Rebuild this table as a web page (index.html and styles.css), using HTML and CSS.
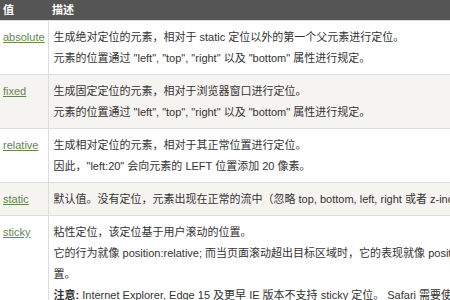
FILE: index.html
```html
<!DOCTYPE html>
<html lang="zh-CN">
<head>
  <meta charset="UTF-8">
  <title>CSS position 属性值</title>
  <link rel="stylesheet" href="styles.css">
</head>
<body>
  <div class="page">
    <table class="reference">
      <colgroup>
        <col class="col-value">
        <col>
      </colgroup>
      <tr>
        <th>值</th>
        <th>描述</th>
      </tr>
      <tr>
        <td><a href="#">absolute</a></td>
        <td>
          <p>生成绝对定位的元素，相对于 static 定位以外的第一个父元素进行定位。</p>
          <p>元素的位置通过 "left", "top", "right" 以及 "bottom" 属性进行规定。</p>
        </td>
      </tr>
      <tr>
        <td><a href="#">fixed</a></td>
        <td>
          <p>生成固定定位的元素，相对于浏览器窗口进行定位。</p>
          <p>元素的位置通过 "left", "top", "right" 以及 "bottom" 属性进行规定。</p>
        </td>
      </tr>
      <tr>
        <td><a href="#">relative</a></td>
        <td>
          <p>生成相对定位的元素，相对于其正常位置进行定位。</p>
          <p>因此，"left:20" 会向元素的 LEFT 位置添加 20 像素。</p>
        </td>
      </tr>
      <tr>
        <td><a href="#">static</a></td>
        <td>默认值。没有定位，元素出现在正常的流中（忽略 top, bottom, left, right 或者 z-index 声明）。</td>
      </tr>
      <tr>
        <td><a href="#">sticky</a></td>
        <td>
          <p>粘性定位，该定位基于用户滚动的位置。</p>
          <p>它的行为就像 position:relative; 而当页面滚动超出目标区域时，它的表现就像 position:fixed;，它会固定在目标位置。</p>
          <p><b>注意:</b> Internet Explorer, Edge 15 及更早 IE 版本不支持 sticky 定位。 Safari 需要使用 -webkit- prefix (查看下面的实例)。</p>
        </td>
      </tr>
    </table>
  </div>
</body>
</html>
```

FILE: styles.css
```css
body {
  margin: 0;
  overflow: hidden;
  font-family: "Liberation Sans", "Noto Sans CJK SC", sans-serif;
  font-size: 11px;
  color: #333;
  background: #fff;
}

.page {
  width: 600px;
}

.reference {
  width: 100%;
  border-collapse: collapse;
  table-layout: fixed;
}

.col-value {
  width: 48px;
}

.reference th {
  height: 20px;
  padding: 0 3px;
  background: #555;
  color: #fff;
  font-weight: bold;
  text-align: left;
  line-height: 20px;
}

.reference th + th {
  padding-left: 4px;
}

.reference td {
  padding: 6px 5px 5px 5px;
  border-top: 1px solid #ddd;
  border-bottom: 1px solid #ddd;
  line-height: 21px;
  vertical-align: top;
}

.reference td:first-child {
  padding-left: 3px;
  border-right: 1px solid #ddd;
}

.reference tr:nth-child(odd) td {
  background: #f6f4f0;
}

.reference tr:nth-child(even) td {
  background: #fff;
}

.reference p {
  margin: 0;
}

.reference a {
  color: #64854c;
  text-decoration: underline;
}
```
